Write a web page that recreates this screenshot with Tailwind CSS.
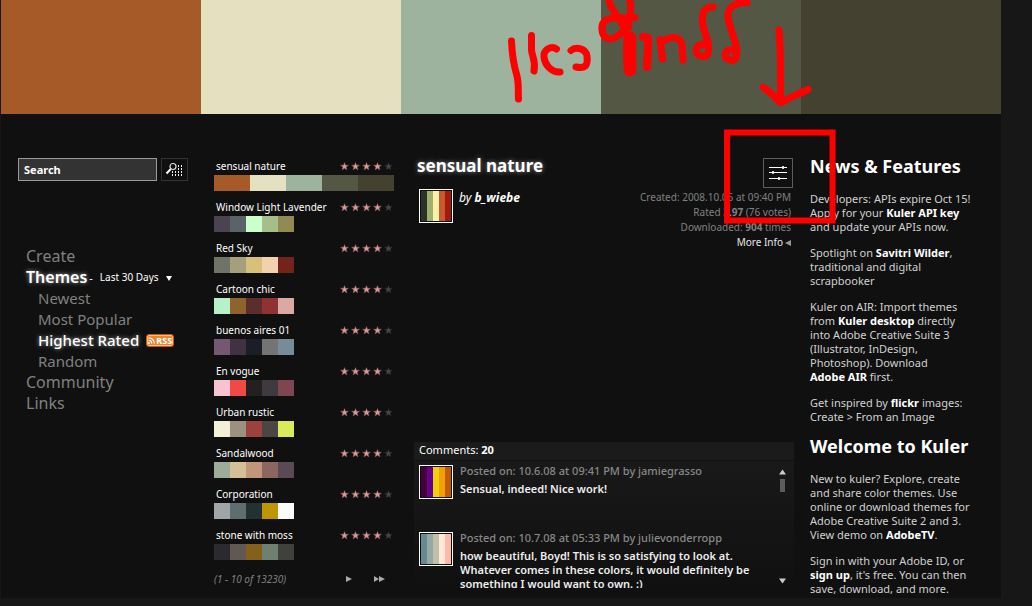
<!DOCTYPE html>
<html lang="en">
<head>
<meta charset="utf-8">
<meta name="viewport" content="width=device-width, initial-scale=1">
<title>Kuler</title>
<script src="https://cdn.jsdelivr.net/npm/@tailwindcss/browser@4"></script>
</head>
<body class="relative min-h-screen overflow-x-hidden bg-[#171717] pb-2 pl-px pr-[31px] font-['Noto_Sans',sans-serif] text-[11px] leading-[14px] text-[#d0d0d0]">
<div class="bg-[#101010]">
  <!-- Colours of the selected theme -->
  <div id="palette" class="grid h-[114px] grid-cols-5"></div>

  <main class="flex pb-0.5 pt-[42px]">
    <!-- Search and navigation -->
    <aside class="w-[213px] shrink-0 pl-[17px] pt-0.5">
      <form class="flex gap-1" onsubmit="return false">
        <input type="text" aria-label="Search" placeholder="Search" class="h-[23px] w-[139px] border border-[#9a9a9a] bg-[#333] px-[5px] text-[11px] font-bold text-white outline-none placeholder:text-white placeholder:opacity-100">
        <button type="submit" aria-label="Search themes" class="flex h-[23px] w-[27px] items-center justify-center border border-[#333]">
          <svg width="19" height="15" viewBox="0 0 19 15" fill="none">
            <circle cx="8" cy="4.500" r="3" stroke="#ddd" stroke-width="1.2"/>
            <path d="M5.800 7 1.500 11.500" stroke="#fff" stroke-width="2"/>
            <path d="M13 4h1M16 4h1M13 7h1M16 7h1M7 10h1M10 10h1M13 10h1M16 10h1M7 13h1M10 13h1M13 13h1M16 13h1" stroke="#eee" stroke-width="2"/>
          </svg>
        </button>
      </form>
      <nav class="pl-2 pt-[65px] text-[16px] leading-[21px] text-[#808080]">
        <a href="#" class="block">Create</a>
        <div class="flex items-center">
          <a href="#" class="font-semibold text-white [text-shadow:0_0_4px_#aaa]">Themes</a>
          <span class="pl-0.5 text-[11px] text-white">-</span>
          <label class="flex items-center pl-[7px] text-white">
            <select aria-label="Period" class="w-[66px] appearance-none bg-transparent text-[10px] leading-[21px] outline-none"><option>Last 30 Days</option></select>
            <svg width="6" height="6" viewBox="0 0 6 6"><path d="M0 1h6L3 6z" fill="#fff"/></svg>
          </label>
        </div>
        <div class="pl-3 text-[15px] leading-[21px]">
          <a href="#" class="block">Newest</a>
          <a href="#" class="block">Most Popular</a>
          <div class="flex items-center gap-[7px]">
            <a href="#" class="font-medium text-white [text-shadow:0_0_4px_#aaa]">Highest Rated</a>
            <a href="#" class="flex h-[13px] w-[28px] items-center justify-center gap-px rounded-[3px] border border-[#c8590e] bg-[#e8862e] text-[9px] font-bold leading-[11px] text-white ring-1 ring-inset ring-[#f6c08a]">
              <svg width="7" height="7" viewBox="0 0 7 7" fill="none" stroke="#fff" stroke-width="1.1"><circle cx="1" cy="6" r=".5"/><path d="M.5 3.300A3.200 3.200 0 0 1 3.700 6.500M.5.7A5.800 5.800 0 0 1 6.300 6.500"/></svg>RSS</a>
          </div>
          <a href="#" class="block">Random</a>
        </div>
        <a href="#" class="block">Community</a>
        <a href="#" class="block">Links</a>
      </nav>
    </aside>

    <!-- Theme list -->
    <section class="w-[180px] shrink-0 pt-px">
      <ul id="themes" class="flex flex-col gap-[7px]"></ul>
      <div class="flex items-center pt-[10px] leading-[18px]">
        <span class="w-[132px] text-[10px] italic text-[#808080]">(1 - 10 of 13230)</span>
        <button aria-label="Next page" class="w-7"><svg width="6" height="8" viewBox="0 0 6 8"><path d="M0 1v6l6-3z" fill="#aaa"/></svg></button>
        <button aria-label="Last page"><svg width="11" height="8" viewBox="0 0 11 8"><path d="M0 1v6l5-3zM5 1v6l6-3z" fill="#aaa"/></svg></button>
      </div>
    </section>

    <!-- Theme detail -->
    <section class="flex min-w-0 flex-1 flex-col pb-2 pl-5">
      <div class="flex justify-between pl-[3px]">
        <div>
          <h1 class="text-[17px] font-bold leading-5 text-white [text-shadow:0_0_5px_#888]">sensual nature</h1>
          <div class="flex gap-[6px] pl-0.5 pt-[13px]">
            <div data-thumb="#2b3228 #9eb06c #fdf0a8 #c95a2e #a41b0b" class="flex size-[34px] border border-white bg-[#101010] p-px"></div>
            <p class="text-[12px] italic leading-[17px] text-white">by<a href="#" class="font-bold"> b_wiebe</a></p>
          </div>
        </div>
        <div class="flex flex-col items-end pt-0.5 text-right text-[10px] leading-[15px] text-[#808080]">
          <button aria-label="Edit theme" class="mr-px flex size-[30px] items-center justify-center border border-[#5c5c5c]">
            <svg width="18" height="14" viewBox="0 0 18 14" stroke="#fff" fill="#fff"><path d="M0 1.500h18M0 6.500h18M0 12.500h18"/><path d="M13.500.5h1v2h-1zM3.500 5.500h1v2h-1zM9.500 11.500h1v2h-1z"/></svg>
          </button>
          <div class="pr-[3px] pt-0.5">
            <p>Created: 2008.10.06 at 09:40 PM</p>
            <p>Rated <b>3.97</b> (76 votes)</p>
            <p>Downloaded: <b>904</b> times</p>
            <p class="flex items-center justify-end gap-0.5"><a href="#" class="text-[#e8e8e8]">More Info</a><svg width="6" height="6" viewBox="0 0 6 6"><path d="M6 0v6L0 3z" fill="#999"/></svg></p>
          </div>
        </div>
      </div>

      <div class="mt-auto">
        <h2 class="h-[18px] bg-[#1b1b1b] pl-[5px] text-[11px] leading-4 text-white">Comments: <b>20</b></h2>
        <div class="mt-px flex h-[127px] overflow-hidden bg-linear-to-b from-[#191919] to-[#101010] pl-[5px] pr-2 pt-1">
          <div class="flex min-w-0 flex-1 flex-col gap-[33px]">
            <article class="flex h-[34px] gap-[7px]">
              <div data-thumb="#450038 #650090 #f2cf08 #f2a008 #c05d04" class="flex size-[34px] shrink-0 border border-white bg-[#101010] p-px"></div>
              <div class="whitespace-nowrap"><p class="leading-3 font-medium text-[#888]">Posted on: 10.6.08 at 09:41 PM by jamiegrasso</p>
              <p class="pt-[5px] font-semibold text-[#eee]">Sensual, indeed! Nice work!</p></div>
            </article>
            <article class="flex h-[34px] gap-[7px]">
              <div data-thumb="#668a94 #98a8a0 #c0c0aa #ffe8d6 #ffb8aa" class="flex size-[34px] shrink-0 border border-white bg-[#101010] p-px"></div>
              <div class="whitespace-nowrap"><p class="leading-3 font-medium text-[#888]">Posted on: 10.7.08 at 05:33 PM by julievonderropp</p>
              <p class="pt-[5px] font-semibold text-[#eee]">how beautiful, Boyd! This is so satisfying to look at.<br>Whatever comes in these colors, it would definitely be<br>something I would want to own. :)</p></div>
            </article>
          </div>
          <div class="flex flex-col items-center pb-1 pt-1">
            <button aria-label="Scroll up"><svg width="7" height="6" viewBox="0 0 7 6"><path d="M0 5.500h7L3.500.5z" fill="#ccc"/></svg></button>
            <span class="mt-1 h-[13px] w-[5px] bg-[#5c5c5c]"></span>
            <button aria-label="Scroll down" class="mt-auto"><svg width="7" height="6" viewBox="0 0 7 6"><path d="M0 .5h7L3.500 5.500z" fill="#ccc"/></svg></button>
          </div>
        </div>
      </div>
    </section>

    <!-- News -->
    <aside class="w-[207px] shrink-0 whitespace-nowrap pl-4">
      <h2 class="text-[18px] font-bold leading-5 text-white">News &amp; Features</h2>
      <div class="flex flex-col gap-3 pt-4">
        <p>Developers: APIs expire Oct 15!<br>Apply for your <a href="#" class="font-bold text-white">Kuler API key</a><br>and update your APIs now.</p>
        <p>Spotlight on <a href="#" class="font-bold text-white">Savitri Wilder</a>,<br>traditional and digital<br>scrapbooker</p>
        <p>Kuler on AIR: Import themes<br>from <a href="#" class="font-bold text-white">Kuler desktop</a> directly<br>into Adobe Creative Suite 3<br>(Illustrator, InDesign,<br>Photoshop). Download<br><a href="#" class="font-bold text-white">Adobe AIR</a> first.</p>
        <p>Get inspired by <a href="#" class="font-bold text-white">flickr</a> images:<br>Create &gt; From an Image</p>
      </div>
      <h2 class="pt-3 text-[18px] font-bold leading-5 text-white">Welcome to Kuler</h2>
      <div class="flex flex-col gap-3 pt-4">
        <p>New to kuler? Explore, create<br>and share color themes. Use<br>online or download themes for<br>Adobe Creative Suite 2 and 3.<br>View demo on <a href="#" class="font-bold text-white">AdobeTV</a>.</p>
        <p>Sign in with your Adobe ID, or<br><a href="#" class="font-bold text-white">sign up</a>, it's free. You can then<br>save, download, and more.</p>
      </div>
    </aside>
  </main>
</div>

<!-- Hand-drawn annotation over the page -->
<svg class="pointer-events-none absolute left-0 top-0" width="1032" height="240" viewBox="0 0 1032 240" fill="none" stroke="#f00" stroke-width="7" stroke-linecap="round" stroke-linejoin="round">
  <path d="M511.500 41C512 55 514 66 517 76C519 84 518 91 518.500 99"/>
  <path d="M531.500 35.500V50C532 57 536 60 534 71"/>
  <path d="M556.500 49C551 45 543 50 544 57C545 66 553 73 560 72"/>
  <path d="M571 50.500C576 46 586 49 587 56C588 65 586 69 576 67"/>
  <path d="M609 -3C608 8 617 12 624 28M629 -3C632 6 631 16 627 26M635 17.500C625 19 614 16 606 20C600 24 601 34 606 38C613 42 621 33 629 27"/>
  <path d="M630 38C629 49 630 58 630 70" stroke-width="13"/>
  <path d="M643 37C650 37 648 38 648 46L647 67" stroke-width="8"/>
  <path d="M660 39.500L662.500 59M661 43C672 34 682 37 682 46L683 60"/>
  <path d="M713 7C704 7 702 12 702.500 23C704 34 711 43 708 54C704 59 695 55 696 50C697 44 704 44 708 43"/>
  <path d="M747 2.500C735 2 727 8 728 17C730 32 739 44 736 58C734 63 725 59 725 55C726 48 732 50 737 49"/>
  <path d="M779 30C780 48 781 60 780.500 74V102M763 87.500C770 91 775 98 781 103C789 97 799 94 808 89.500"/>
  <path d="M727 132.500H832.500V220.500H727z" stroke-width="6" stroke-linejoin="miter"/>
</svg>

<script>
  const fill = (el, colors) => {
    colors.forEach(c => {
      const s = document.createElement('span');
      s.className = 'h-full flex-1';
      s.style.backgroundColor = c;
      el.append(s);
    });
  };
  const themes = [
    ['sensual nature', '#a55a28 #e5e0c0 #9db39e #545743 #454130'],
    ['Window Light Lavender', '#4b4252 #5a6368 #ccffcc #a8bd8c #928a55'],
    ['Red Sky', '#707466 #a69f7b #d8c078 #f1d2ac #74231b'],
    ['Cartoon chic', '#b7f1c9 #8e632e #5b2e2c #8e3233 #daa8a5'],
    ['buenos aires 01', '#745773 #403240 #1b1e27 #747474 #788b98'],
    ['En vogue', '#f5c4d0 #f14a45 #242020 #403a40 #7d4650'],
    ['Urban rustic', '#f4efd9 #9b9081 #9c423e #4d4543 #d9eb5a'],
    ['Sandalwood', '#9dab99 #d4c096 #c2967a #8c6661 #594a53'],
    ['Corporation', '#a0a5a7 #5e6d70 #243132 #be9700 #fafaff'],
    ['stone with moss', '#2b2a30 #5f5951 #84601c #6e8171 #41413b']
  ];
  const star = 'M4.500 0 5.700 3H9L6.400 5 7.300 8.500 4.500 6.500 1.700 8.500 2.600 5 0 3H3.300z';
  fill(document.getElementById('palette'), themes[0][1].split(' '));
  document.querySelectorAll('[data-thumb]').forEach(el => fill(el, el.dataset.thumb.split(' ')));
  themes.forEach(([name, colors], i) => {
    const li = document.createElement('li');
    let stars = '';
    for (let n = 0; n < 5; n++) {
      const on = n < 4;
      stars += `<svg width="9" height="9" viewBox="-0.500 -0.500 10 10"><path d="${star}" fill="${on ? '#e09a9a' : '#484848'}" stroke="${on ? '#6b5050' : '#222'}" stroke-width=".5"/></svg>`;
    }
    li.innerHTML = `<div class="flex h-[18px] items-center justify-between pl-0.5 pr-px"><a href="#" class="whitespace-nowrap text-[10px] leading-[18px] text-white">${name}</a><span class="flex gap-0.5" role="img" aria-label="4 of 5 stars">${stars}</span></div><div class="${i ? 'flex h-4 w-20' : 'flex h-4 w-full'}"></div>`;
    fill(li.lastElementChild, colors.split(' '));
    document.getElementById('themes').append(li);
  });
</script>
</body>
</html>
